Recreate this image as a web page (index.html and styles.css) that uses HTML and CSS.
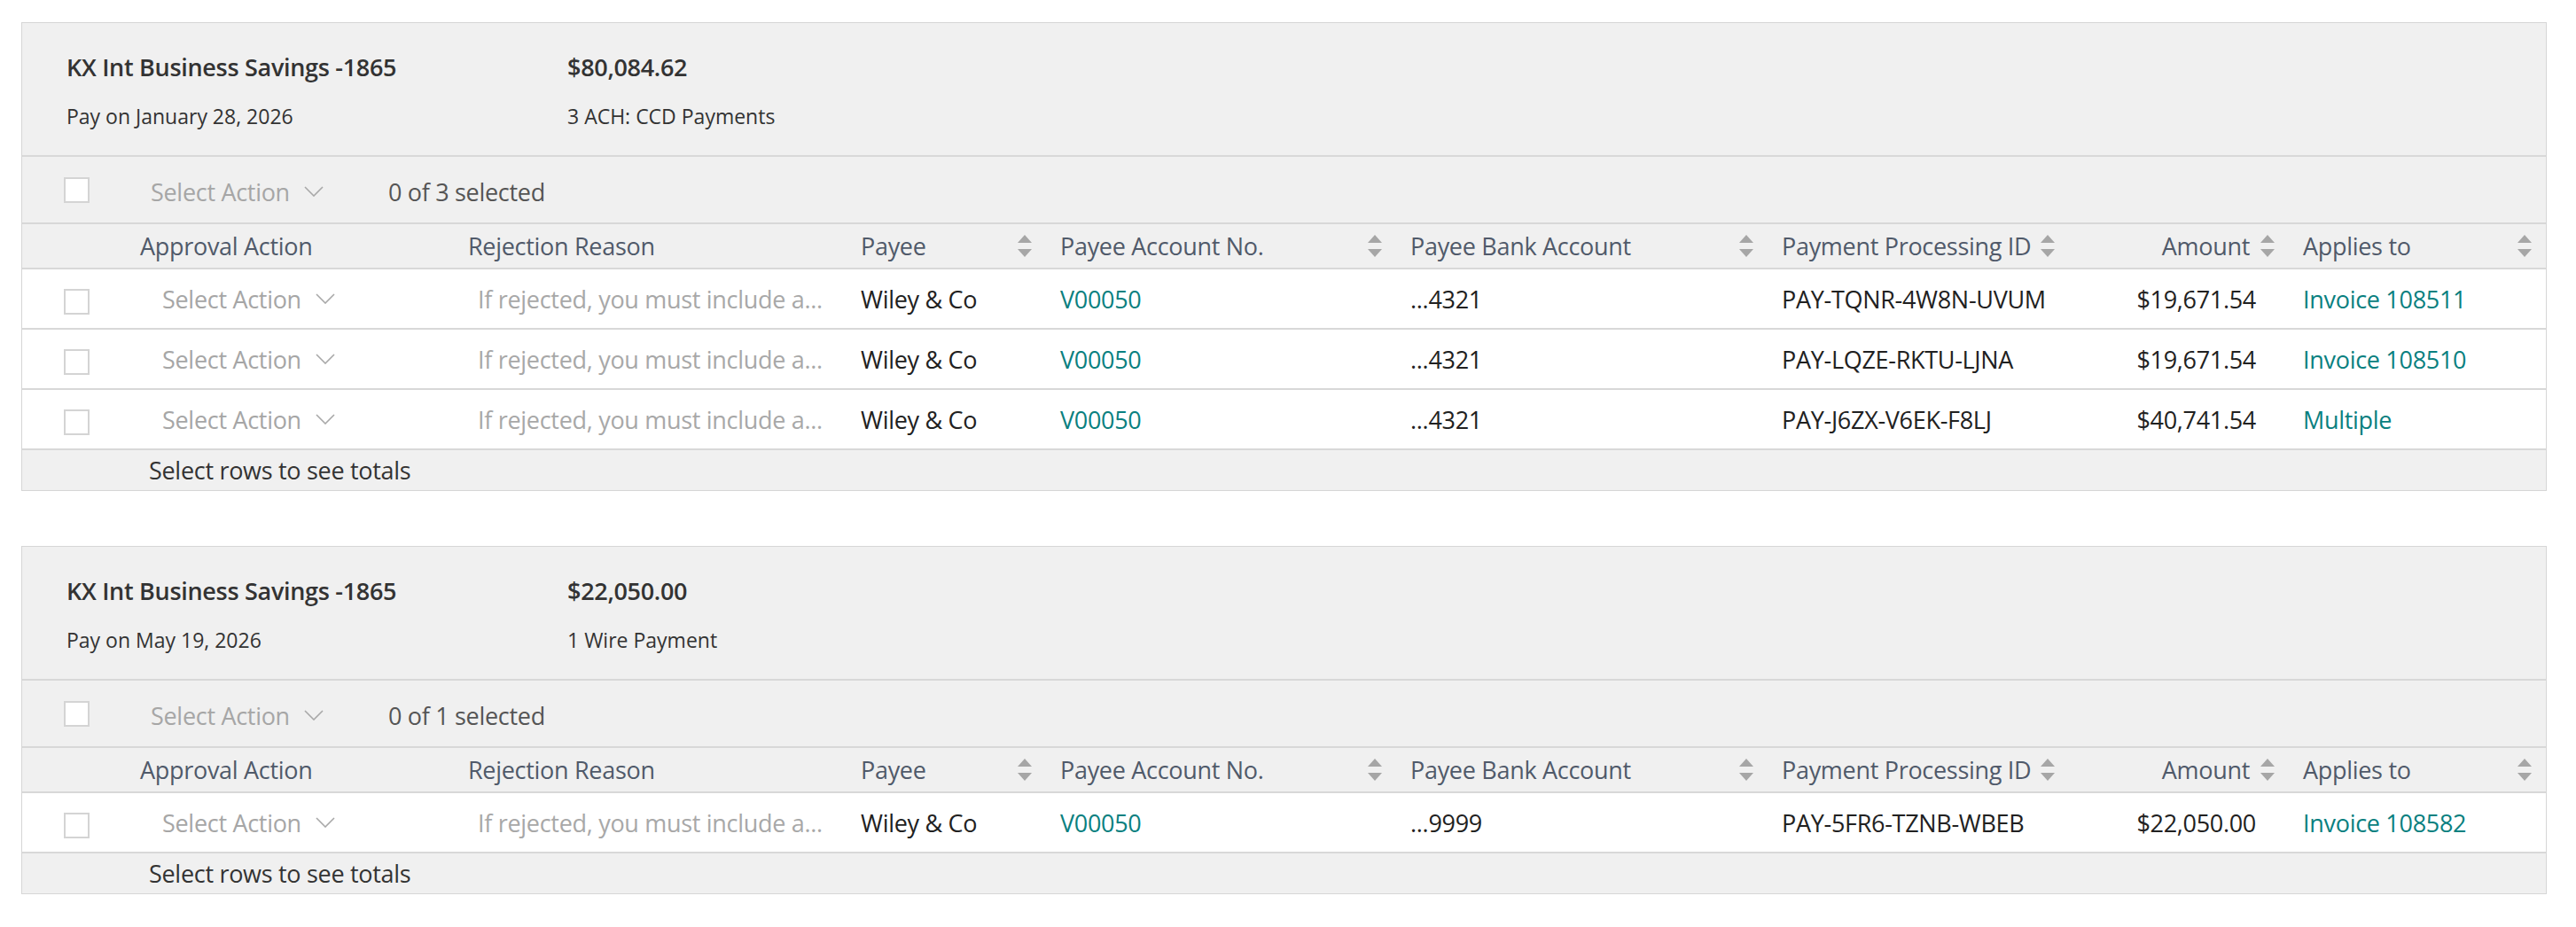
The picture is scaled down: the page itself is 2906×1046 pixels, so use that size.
FILE: index.html
```html
<!DOCTYPE html>
<html lang="en">
<head>
    <meta charset="UTF-8">
    <meta name="viewport" content="width=device-width, initial-scale=1.0">
    <title>Payment Approvals</title>
    <link rel="stylesheet" href="styles.css">
</head>
<body>
    <div class="batch">
        <div class="batch-head">
            <div class="head-col head-account">
                <div class="head-title">KX Int Business Savings -1865</div>
                <div class="head-sub">Pay on January 28, 2026</div>
            </div>
            <div class="head-col">
                <div class="head-title">$80,084.62</div>
                <div class="head-sub">3 ACH: CCD Payments</div>
            </div>
        </div>
        <div class="batch-actions">
            <span class="check"></span>
            <span class="action-select bar-select">Select Action <svg class="chev" viewBox="0 0 22 12"><path d="M1 1 L11 11 L21 1" /></svg></span>
            <span class="sel-count">0 of 3 selected</span>
        </div>
        <table class="pay-table">
            <colgroup>
                <col class="c-check">
                <col class="c-approval">
                <col class="c-reject">
                <col class="c-payee">
                <col class="c-acct">
                <col class="c-bank">
                <col class="c-ppid">
                <col class="c-amount">
                <col class="c-applies">
            </colgroup>
            <thead>
                <tr>
                    <th></th>
                    <th>Approval Action</th>
                    <th>Rejection Reason</th>
                    <th><div class="th-sort"><span>Payee</span><svg class="sort" viewBox="0 0 16 26"><path d="M8 0 L16 9 L0 9 Z M0 16 L16 16 L8 25 Z" /></svg></div></th>
                    <th><div class="th-sort"><span>Payee Account No.</span><svg class="sort" viewBox="0 0 16 26"><path d="M8 0 L16 9 L0 9 Z M0 16 L16 16 L8 25 Z" /></svg></div></th>
                    <th><div class="th-sort"><span>Payee Bank Account</span><svg class="sort" viewBox="0 0 16 26"><path d="M8 0 L16 9 L0 9 Z M0 16 L16 16 L8 25 Z" /></svg></div></th>
                    <th class="th-tight"><div class="th-sort"><span>Payment Processing ID</span><svg class="sort" viewBox="0 0 16 26"><path d="M8 0 L16 9 L0 9 Z M0 16 L16 16 L8 25 Z" /></svg></div></th>
                    <th><div class="th-sort th-right"><span>Amount</span><svg class="sort" viewBox="0 0 16 26"><path d="M8 0 L16 9 L0 9 Z M0 16 L16 16 L8 25 Z" /></svg></div></th>
                    <th><div class="th-sort"><span>Applies to</span><svg class="sort" viewBox="0 0 16 26"><path d="M8 0 L16 9 L0 9 Z M0 16 L16 16 L8 25 Z" /></svg></div></th>
                </tr>
            </thead>
            <tbody>
                <tr>
                    <td><span class="check"></span></td>
                    <td><span class="action-select">Select Action <svg class="chev" viewBox="0 0 22 12"><path d="M1 1 L11 11 L21 1" /></svg></span></td>
                    <td><span class="reason">If rejected, you must include a...</span></td>
                    <td>Wiley &amp; Co</td>
                    <td><a class="link">V00050</a></td>
                    <td>...4321</td>
                    <td>PAY-TQNR-4W8N-UVUM</td>
                    <td class="num">$19,671.54</td>
                    <td><a class="link">Invoice 108511</a></td>
                </tr>
                <tr>
                    <td><span class="check"></span></td>
                    <td><span class="action-select">Select Action <svg class="chev" viewBox="0 0 22 12"><path d="M1 1 L11 11 L21 1" /></svg></span></td>
                    <td><span class="reason">If rejected, you must include a...</span></td>
                    <td>Wiley &amp; Co</td>
                    <td><a class="link">V00050</a></td>
                    <td>...4321</td>
                    <td>PAY-LQZE-RKTU-LJNA</td>
                    <td class="num">$19,671.54</td>
                    <td><a class="link">Invoice 108510</a></td>
                </tr>
                <tr>
                    <td><span class="check"></span></td>
                    <td><span class="action-select">Select Action <svg class="chev" viewBox="0 0 22 12"><path d="M1 1 L11 11 L21 1" /></svg></span></td>
                    <td><span class="reason">If rejected, you must include a...</span></td>
                    <td>Wiley &amp; Co</td>
                    <td><a class="link">V00050</a></td>
                    <td>...4321</td>
                    <td>PAY-J6ZX-V6EK-F8LJ</td>
                    <td class="num">$40,741.54</td>
                    <td><a class="link">Multiple</a></td>
                </tr>
            </tbody>
        </table>
        <div class="batch-foot">Select rows to see totals</div>
    </div>

    <div class="batch">
        <div class="batch-head">
            <div class="head-col head-account">
                <div class="head-title">KX Int Business Savings -1865</div>
                <div class="head-sub">Pay on May 19, 2026</div>
            </div>
            <div class="head-col">
                <div class="head-title">$22,050.00</div>
                <div class="head-sub">1 Wire Payment</div>
            </div>
        </div>
        <div class="batch-actions">
            <span class="check"></span>
            <span class="action-select bar-select">Select Action <svg class="chev" viewBox="0 0 22 12"><path d="M1 1 L11 11 L21 1" /></svg></span>
            <span class="sel-count">0 of 1 selected</span>
        </div>
        <table class="pay-table">
            <colgroup>
                <col class="c-check">
                <col class="c-approval">
                <col class="c-reject">
                <col class="c-payee">
                <col class="c-acct">
                <col class="c-bank">
                <col class="c-ppid">
                <col class="c-amount">
                <col class="c-applies">
            </colgroup>
            <thead>
                <tr>
                    <th></th>
                    <th>Approval Action</th>
                    <th>Rejection Reason</th>
                    <th><div class="th-sort"><span>Payee</span><svg class="sort" viewBox="0 0 16 26"><path d="M8 0 L16 9 L0 9 Z M0 16 L16 16 L8 25 Z" /></svg></div></th>
                    <th><div class="th-sort"><span>Payee Account No.</span><svg class="sort" viewBox="0 0 16 26"><path d="M8 0 L16 9 L0 9 Z M0 16 L16 16 L8 25 Z" /></svg></div></th>
                    <th><div class="th-sort"><span>Payee Bank Account</span><svg class="sort" viewBox="0 0 16 26"><path d="M8 0 L16 9 L0 9 Z M0 16 L16 16 L8 25 Z" /></svg></div></th>
                    <th class="th-tight"><div class="th-sort"><span>Payment Processing ID</span><svg class="sort" viewBox="0 0 16 26"><path d="M8 0 L16 9 L0 9 Z M0 16 L16 16 L8 25 Z" /></svg></div></th>
                    <th><div class="th-sort th-right"><span>Amount</span><svg class="sort" viewBox="0 0 16 26"><path d="M8 0 L16 9 L0 9 Z M0 16 L16 16 L8 25 Z" /></svg></div></th>
                    <th><div class="th-sort"><span>Applies to</span><svg class="sort" viewBox="0 0 16 26"><path d="M8 0 L16 9 L0 9 Z M0 16 L16 16 L8 25 Z" /></svg></div></th>
                </tr>
            </thead>
            <tbody>
                <tr>
                    <td><span class="check"></span></td>
                    <td><span class="action-select">Select Action <svg class="chev" viewBox="0 0 22 12"><path d="M1 1 L11 11 L21 1" /></svg></span></td>
                    <td><span class="reason">If rejected, you must include a...</span></td>
                    <td>Wiley &amp; Co</td>
                    <td><a class="link">V00050</a></td>
                    <td>...9999</td>
                    <td>PAY-5FR6-TZNB-WBEB</td>
                    <td class="num">$22,050.00</td>
                    <td><a class="link">Invoice 108582</a></td>
                </tr>
            </tbody>
        </table>
        <div class="batch-foot">Select rows to see totals</div>
    </div>
</body>
</html>
```

FILE: styles.css
```css
body {
    margin: 0;
    padding: 25px 33px 0 24px;
    font-family: "Segoe UI", "Open Sans", sans-serif;
    font-size: 27px;
    letter-spacing: -0.3px;
    color: #212121;
    background-color: #fff;
}

.batch {
    border: 1px solid #d6d6d6;
    background-color: #f0f0f0;
    margin-bottom: 62px;
}

/* batch summary on top */
.batch-head {
    display: flex;
    padding: 32px 0 28px 50px;
    border-bottom: 2px solid #d8d8d8;
}

.head-account {
    width: 565px;
}

.head-title {
    font-weight: 600;
    color: #333;
    line-height: 36px;
}

.head-sub {
    font-size: 23px;
    letter-spacing: 0;
    line-height: 32px;
    margin-top: 21px;
    color: #333;
}

/* bulk action bar */
.batch-actions {
    display: flex;
    align-items: center;
    height: 74px;
    padding-left: 47px;
    border-bottom: 2px solid #d8d8d8;
}

.check {
    display: inline-block;
    width: 25px;
    height: 25px;
    border: 2px solid #d4d4d4;
    background-color: #fff;
    vertical-align: middle;
}

.action-select {
    display: inline-flex;
    align-items: center;
    gap: 16px;
    color: #a6a6a6;
}

.bar-select {
    margin-left: 69px;
    margin-top: 4px;
}

.chev {
    width: 22px;
    height: 12px;
    fill: none;
    stroke: #a8a8a8;
    stroke-width: 1.6;
}

.sel-count {
    margin-left: 73px;
    margin-top: 4px;
    color: #555;
}

/* payments table */
.pay-table {
    width: 100%;
    table-layout: fixed;
    border-collapse: collapse;
}

.c-check { width: 117px; }
.c-approval { width: 370px; }
.c-reject { width: 443px; }
.c-payee { width: 225px; }
.c-acct { width: 395px; }
.c-bank { width: 419px; }
.c-ppid { width: 332px; }
.c-amount { width: 256px; }

.pay-table th {
    height: 49px;
    padding: 0 16px;
    text-align: left;
    font-weight: 400;
    color: #505a6a;
    border-bottom: 2px solid #d8d8d8;
    white-space: nowrap;
}

.pay-table th.th-tight {
    padding-right: 8px;
}

.th-sort {
    display: flex;
    align-items: center;
    justify-content: space-between;
}

.th-right {
    justify-content: flex-end;
    gap: 12px;
}

.sort {
    width: 16px;
    height: 26px;
    fill: #a6a6a6;
    flex-shrink: 0;
}

.pay-table td {
    height: 66px;
    padding: 0 16px;
    background-color: #fff;
    border-bottom: 2px solid #d8d8d8;
    white-space: nowrap;
    overflow: hidden;
}

.pay-table td:first-child {
    padding-left: 47px;
}

.pay-table th:first-child {
    padding: 0;
}

.pay-table td .action-select {
    padding-left: 25px;
}

.reason {
    padding-left: 11px;
    color: #a8a8a8;
}

.pay-table td.num {
    text-align: right;
    padding-right: 37px;
}

.link {
    color: #0a8080;
    text-decoration: none;
}

.batch-foot {
    height: 45px;
    line-height: 45px;
    padding-left: 143px;
    color: #333;
}
```
